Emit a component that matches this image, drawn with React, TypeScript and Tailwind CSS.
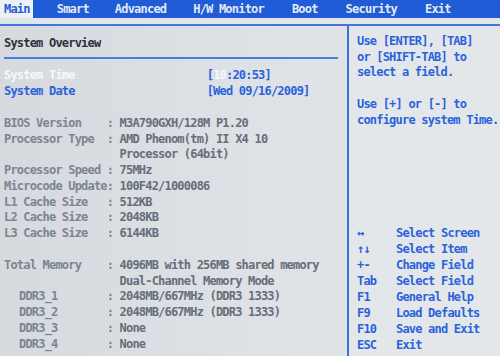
const MENU = [
  { label: 'Smart', ml: 'ml-[24px]' },
  { label: 'Advanced', ml: 'ml-[26px]' },
  { label: 'H/W Monitor', ml: 'ml-[27px]' },
  { label: 'Boot', ml: 'ml-[28px]' },
  { label: 'Security', ml: 'ml-[28px]' },
  { label: 'Exit', ml: 'ml-[28px]' },
];

const INFO = [
  { label: 'BIOS Version', value: 'M3A790GXH/128M P1.20' },
  { label: 'Processor Type', value: 'AMD Phenom(tm) II X4 10' },
  { label: '', value: 'Processor (64bit)', noColon: true },
  { label: 'Processor Speed', value: '75MHz' },
  { label: 'Microcode Update', value: '100F42/1000086' },
  { label: 'L1 Cache Size', value: '512KB' },
  { label: 'L2 Cache Size', value: '2048KB' },
  { label: 'L3 Cache Size', value: '6144KB' },
];

const MEMORY = [
  { label: 'Total Memory', value: '4096MB with 256MB shared memory' },
  { label: '', value: 'Dual-Channel Memory Mode', noColon: true },
  { label: 'DDR3_1', value: '2048MB/667MHz (DDR3 1333)', indent: true },
  { label: 'DDR3_2', value: '2048MB/667MHz (DDR3 1333)', indent: true },
  { label: 'DDR3_3', value: 'None', indent: true },
  { label: 'DDR3_4', value: 'None', indent: true },
];

const KEYS = [
  ['↔', 'Select Screen'],
  ['↑↓', 'Select Item'],
  ['+-', 'Change Field'],
  ['Tab', 'Select Field'],
  ['F1', 'General Help'],
  ['F9', 'Load Defaults'],
  ['F10', 'Save and Exit'],
  ['ESC', 'Exit'],
];

interface RowProps {
  label: string;
  value: string;
  noColon?: boolean;
  indent?: boolean;
}

function InfoRow({ label, value, noColon, indent }: RowProps) {
  return (
    <div className="flex whitespace-pre h-[15.75px] items-center">
      <span className={`w-[102.7px] shrink-0 text-[#7b8590] ${indent ? 'pl-[15px]' : ''}`}>{label}</span>
      <span className="text-[#7b8590]">{noColon ? '  ' : ': '}</span>
      <span className="text-[#656e7a]">{value}</span>
    </div>
  );
}

export default function App() {
  return (
    <div
      className="w-[500px] h-[356px] overflow-hidden flex flex-col bg-[#dde0e4] text-[12px] font-bold tracking-[-0.8px] leading-[16px]"
      style={{ fontFamily: '"DejaVu Sans Mono", "Liberation Mono", monospace' }}
    >
      {/* top menu */}
      <div className="h-[18px] bg-[#1f5cd6] flex items-center text-[#e2eaf7] shrink-0">
        <span className="h-full flex items-center bg-[#eef1f4] text-[#1f5cd6] pl-[4px] pr-[3px]">Main</span>
        {MENU.map(m => (
          <span key={m.label} className={m.ml}>{m.label}</span>
        ))}
      </div>

      <div className="h-[6px] shrink-0 bg-[#e2e5e8]" />

      <div className="flex-1 flex border-t-2 border-[#4676dc] min-h-0">
        {/* left panel */}
        <div className="w-[349px] shrink-0 border-r-2 border-[#3f70da] bg-linear-to-r from-[#d6dadf] to-[#e1e4e7] pl-[4px] pt-[9px]">
          <div className="text-[#2b313b]">System Overview</div>
          <div className="mt-[6px] mr-[9px] h-[2px] bg-[#4b7be0]" />

          <div className="mt-[8px] flex whitespace-pre h-[16px] items-center">
            <span className="w-[202.7px] shrink-0 text-[#f6f8fb]">System Time</span>
            <span className="text-[#2a62dc]">[<span className="text-[#f4f7fb]">10</span>:20:53]</span>
          </div>
          <div className="flex whitespace-pre h-[16px] items-center">
            <span className="w-[202.7px] shrink-0 text-[#2a62dc]">System Date</span>
            <span className="text-[#2a62dc]">[Wed 09/16/2009]</span>
          </div>

          <div className="mt-[16px]">
            {INFO.map((r, i) => (
              <InfoRow key={i} {...r} />
            ))}
          </div>

          <div className="mt-[16px]">
            {MEMORY.map((r, i) => (
              <InfoRow key={i} {...r} />
            ))}
          </div>
        </div>

        {/* right panel */}
        <div className="flex-1 flex flex-col bg-[#e4e7ea] pl-[8px] pt-[8px] pb-[3px] text-[#2a62dc] whitespace-pre">
          <div className="leading-[15.7px]">
            <div>Use [ENTER], [TAB]</div>
            <div>or [SHIFT-TAB] to</div>
            <div>select a field.</div>
            <div>&nbsp;</div>
            <div>Use [+] or [-] to</div>
            <div>configure system Time.</div>
          </div>

          <div className="mt-auto">
            {KEYS.map(([k, d]) => (
              <div key={k} className="flex h-[16px] items-center">
                <span className="w-[39px] shrink-0">{k}</span>
                <span>{d}</span>
              </div>
            ))}
          </div>
        </div>
      </div>
    </div>
  );
}
